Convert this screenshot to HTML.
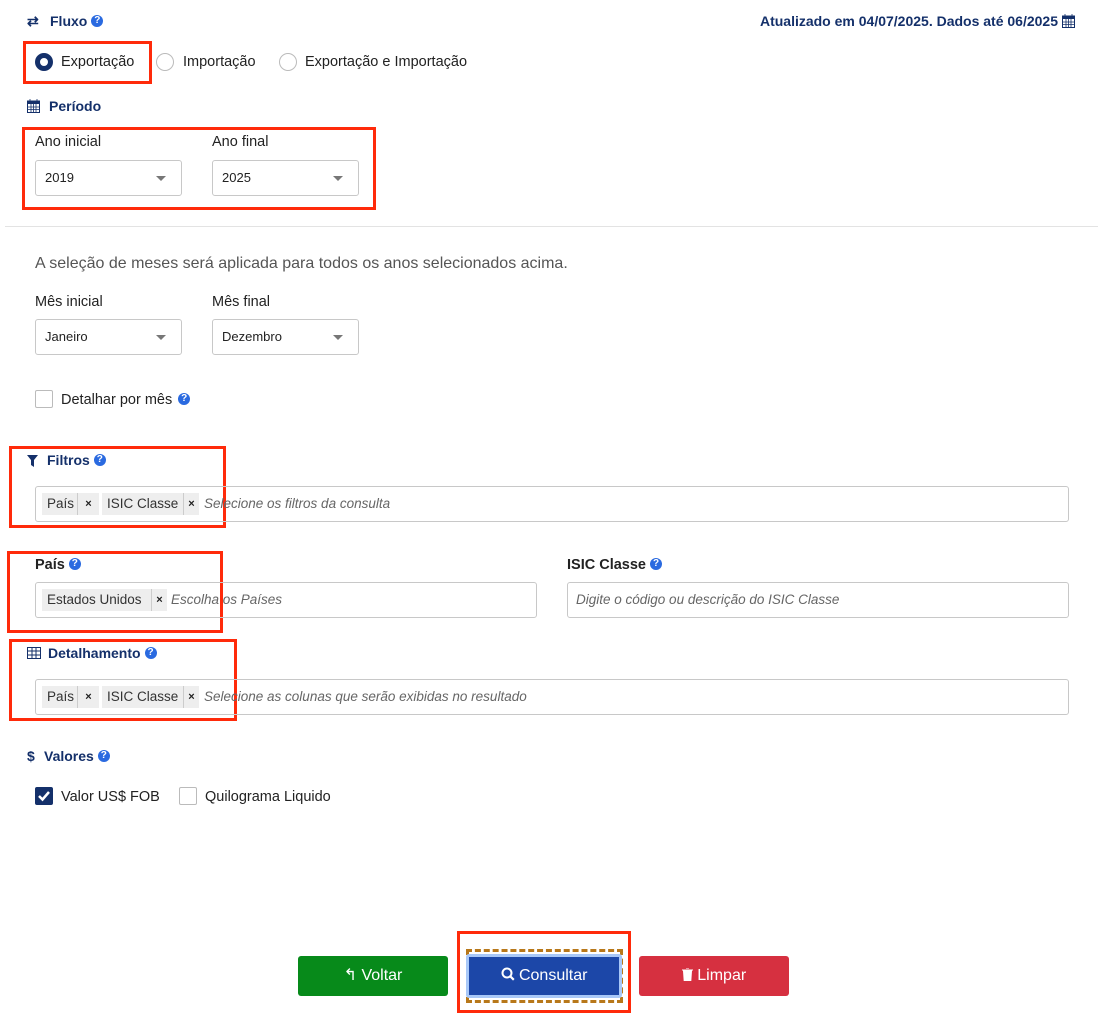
<!DOCTYPE html>
<html><head><meta charset="utf-8"><style>
*{box-sizing:border-box;margin:0;padding:0}
body{width:1106px;height:1013px;background:#fff;font-family:"Liberation Sans",sans-serif;font-size:14.5px;color:#222;position:relative;overflow:hidden}
.a{position:absolute;white-space:nowrap}
.h{font-weight:bold;color:#14306a;font-size:14px}
.q{display:inline-block;width:12px;height:12px;border-radius:50%;background:#2a6ae0;color:#fff;font-size:10px;font-weight:bold;text-align:center;line-height:12px;vertical-align:middle;position:relative;top:-1px;margin-left:4px}
.rb{border:3px solid #ff2a0a}
.sel{border:1px solid #c8c8c8;border-radius:3px;height:36px;width:147px;font-size:13px;padding:0 9px;line-height:34px}
.sel:after{content:"";position:absolute;right:15px;top:15px;border:5px solid transparent;border-top:5px solid #777}
.inp{border:1px solid #c8c8c8;border-radius:3px;height:36px;font-size:13.5px}
.tag{position:absolute;top:6px;height:22px;background:#eee;line-height:22px;padding:0 5px;color:#333;white-space:nowrap;overflow:hidden}
.x{position:absolute;top:6px;height:22px;line-height:22px;width:16px;text-align:center;background:#eee;border-left:1px solid #ccc;font-weight:bold;font-size:11px}
.ph{position:absolute;top:0;line-height:34px;font-style:italic;color:#666;white-space:nowrap;overflow:hidden}
.rad{width:18px;height:18px;border:1px solid #bbb;border-radius:50%}
.cb{width:18px;height:18px;border:1px solid #bbb;border-radius:2px}
.btn{height:40px;border-radius:3px;color:#fff;font-size:16px;text-align:center;line-height:40px}
</style></head><body>
<div class="a h" style="left:27px;top:13px"><span style="font-size:14px">⇄</span></div>
<div class="a h" style="left:50px;top:13px">Fluxo<span class="q">?</span></div>
<div class="a h" style="right:48px;top:13px;font-size:14px">Atualizado em 04/07/2025. Dados até 06/2025</div>
<svg class="a" style="left:1062px;top:14px" width="13" height="14" viewBox="0 0 13 14"><rect x="0.5" y="2" width="12" height="11.5" fill="none" stroke="#14306a"/><rect x="0.5" y="2" width="12" height="3" fill="#14306a"/><path d="M3 0v3M10 0v3M1 8h11M1 10.5h11M4 5v9M6.5 5v9M9 5v9" stroke="#14306a" stroke-width="0.8"/></svg>

<div class="a rb" style="left:23px;top:41px;width:129px;height:43px"></div>
<div class="a rad" style="left:35px;top:53px;border:5px solid #14306a"></div>
<div class="a" style="left:61px;top:54px">Exportação</div>
<div class="a rad" style="left:156px;top:53px"></div>
<div class="a" style="left:183px;top:54px">Importação</div>
<div class="a rad" style="left:279px;top:53px"></div>
<div class="a" style="left:305px;top:54px">Exportação e Importação</div>

<svg class="a" style="left:27px;top:99px" width="13" height="14" viewBox="0 0 13 14"><rect x="0.5" y="2" width="12" height="11.5" fill="none" stroke="#14306a"/><rect x="0.5" y="2" width="12" height="3" fill="#14306a"/><path d="M3 0v3M10 0v3M1 8h11M1 10.5h11M4 5v9M6.5 5v9M9 5v9" stroke="#14306a" stroke-width="0.8"/></svg>
<div class="a h" style="left:49px;top:98px">Período</div>

<div class="a rb" style="left:22px;top:127px;width:354px;height:83px"></div>
<div class="a" style="left:35px;top:134px">Ano inicial</div>
<div class="a" style="left:212px;top:134px">Ano final</div>
<div class="a sel" style="left:35px;top:160px">2019</div>
<div class="a sel" style="left:212px;top:160px">2025</div>

<div class="a" style="left:5px;top:226px;width:1093px;height:1px;background:#e3e3e3"></div>
<div class="a" style="left:35px;top:255px;font-size:16px;color:#555">A seleção de meses será aplicada para todos os anos selecionados acima.</div>
<div class="a" style="left:35px;top:294px">Mês inicial</div>
<div class="a" style="left:212px;top:294px">Mês final</div>
<div class="a sel" style="left:35px;top:319px">Janeiro</div>
<div class="a sel" style="left:212px;top:319px">Dezembro</div>

<div class="a cb" style="left:35px;top:390px"></div>
<div class="a" style="left:61px;top:392px">Detalhar por mês<span class="q" style="margin-left:6px">?</span></div>

<div class="a rb" style="left:9px;top:446px;width:217px;height:82px"></div>
<svg class="a" style="left:27px;top:455px" width="11" height="12" viewBox="0 0 11 12"><path d="M0 0h11L7 5v7L4 10V5z" fill="#14306a"/></svg>
<div class="a h" style="left:47px;top:452px">Filtros<span class="q">?</span></div>
<div class="a inp" style="left:35px;top:486px;width:1034px">
<div class="tag" style="left:6px">País</div><div class="x" style="left:41px;width:22px">×</div>
<div class="tag" style="left:66px;width:81px">ISIC Classe</div><div class="x" style="left:147px">×</div>
<div class="ph" style="left:168px;width:196px">Selecione os filtros da consulta</div></div>

<div class="a rb" style="left:7px;top:551px;width:216px;height:82px"></div>
<div class="a" style="left:35px;top:557px;font-weight:bold">País<span class="q">?</span></div>
<div class="a inp" style="left:35px;top:582px;width:502px">
<div class="tag" style="left:6px;width:109px">Estados Unidos</div><div class="x" style="left:115px">×</div>
<div class="ph" style="left:135px">Escolha os Países</div></div>
<div class="a" style="left:567px;top:557px;font-weight:bold">ISIC Classe<span class="q">?</span></div>
<div class="a inp" style="left:567px;top:582px;width:502px"><div class="ph" style="left:8px;width:274px">Digite o código ou descrição do ISIC Classe</div></div>

<div class="a rb" style="left:9px;top:639px;width:228px;height:82px"></div>
<svg class="a" style="left:27px;top:647px" width="14" height="12" viewBox="0 0 14 12"><rect x="0.5" y="0.5" width="13" height="11" fill="none" stroke="#14306a"/><path d="M0 4h14M0 8h14M5 0v12M9 0v12" stroke="#14306a"/></svg>
<div class="a h" style="left:48px;top:645px">Detalhamento<span class="q">?</span></div>
<div class="a inp" style="left:35px;top:679px;width:1034px">
<div class="tag" style="left:6px">País</div><div class="x" style="left:41px;width:22px">×</div>
<div class="tag" style="left:66px;width:81px">ISIC Classe</div><div class="x" style="left:147px">×</div>
<div class="ph" style="left:168px;width:334px">Selecione as colunas que serão exibidas no resultado</div></div>

<div class="a h" style="left:27px;top:748px">$</div>
<div class="a h" style="left:44px;top:748px">Valores<span class="q">?</span></div>
<div class="a cb" style="left:35px;top:787px;background:#14306a;border-color:#14306a"><svg width="16" height="16" viewBox="0 0 16 16"><path d="M3 8l3.5 3.5L13 4" stroke="#fff" stroke-width="2.5" fill="none"/></svg></div>
<div class="a" style="left:61px;top:789px">Valor US$ FOB</div>
<div class="a cb" style="left:179px;top:787px"></div>
<div class="a" style="left:205px;top:789px">Quilograma Liquido</div>

<div class="a rb" style="left:457px;top:931px;width:174px;height:82px"></div>
<div class="a" style="left:466px;top:949px;width:157px;height:54px;border:3px dashed #b8781a"></div>
<div class="a btn" style="left:298px;top:956px;width:150px;background:#078a1a">↰ Voltar</div>
<div class="a btn" style="left:466px;top:954px;width:156px;height:44px;background:#1c47a8;border:3px solid #a8c8f8;line-height:38px"><svg width="14" height="14" viewBox="0 0 14 14" style="vertical-align:-1px"><circle cx="6" cy="6" r="4.5" stroke="#fff" stroke-width="2" fill="none"/><path d="M9.3 9.3l3.5 3.5" stroke="#fff" stroke-width="2.2"/></svg> Consultar</div>
<div class="a btn" style="left:639px;top:956px;width:150px;background:#d63040"><svg width="11" height="13" viewBox="0 0 11 13" style="vertical-align:-1px"><path d="M0 2h11M4 0h3M1.5 3h8l-0.7 10h-6.6z" stroke="#fff" fill="#fff"/></svg> Limpar</div>
</body></html>
